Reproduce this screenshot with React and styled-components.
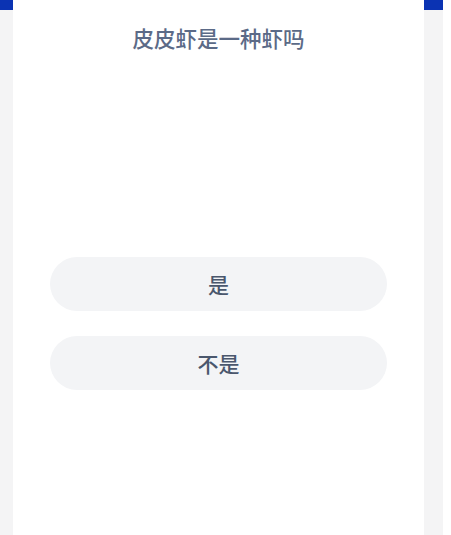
import React from 'react';
import styled, { createGlobalStyle } from 'styled-components';

const Global = createGlobalStyle`
  html, body {
    margin: 0;
    padding: 0;
    background: #ffffff;
  }
  body {
    font-family: "Noto Sans CJK SC", "Noto Sans", sans-serif;
  }
`;

const Page = styled.div`
  display: flex;
  width: 451px;
  min-height: 100vh;
`;

const Rail = styled.div`
  width: ${p => p.w}px;
  flex-shrink: 0;
  background: #f4f4f5;
  display: flex;
  flex-direction: column;
`;

const RailCap = styled.div`
  height: 10px;
  background: #0b33b3;
`;

const Card = styled.main`
  width: 411px;
  flex-shrink: 0;
  background: #ffffff;
  padding: 23px 37px 0;
  box-sizing: border-box;
  display: flex;
  flex-direction: column;
`;

const Question = styled.h1`
  margin: 0;
  text-align: center;
  font-size: 21.5px;
  line-height: 30px;
  font-weight: 500;
  color: #5b6a87;
`;

const Options = styled.div`
  margin-top: 204px;
  display: flex;
  flex-direction: column;
  gap: 25px;
`;

const Option = styled.button`
  height: 54px;
  border: none;
  border-radius: 27px;
  background: #f3f4f6;
  font-family: inherit;
  font-size: 21px;
  font-weight: 500;
  color: #4a576d;
  cursor: pointer;
`;

const Spacer = styled.div`
  flex: 1;
  background: #ffffff;
`;

export default function App() {
  return (
    <>
      <Global />
      <Page>
        <Rail w={13}><RailCap /></Rail>
        <Card>
          <Question>皮皮虾是一种虾吗</Question>
          <Options>
            <Option>是</Option>
            <Option>不是</Option>
          </Options>
        </Card>
        <Rail w={19}><RailCap /></Rail>
        <Spacer />
      </Page>
    </>
  );
}
